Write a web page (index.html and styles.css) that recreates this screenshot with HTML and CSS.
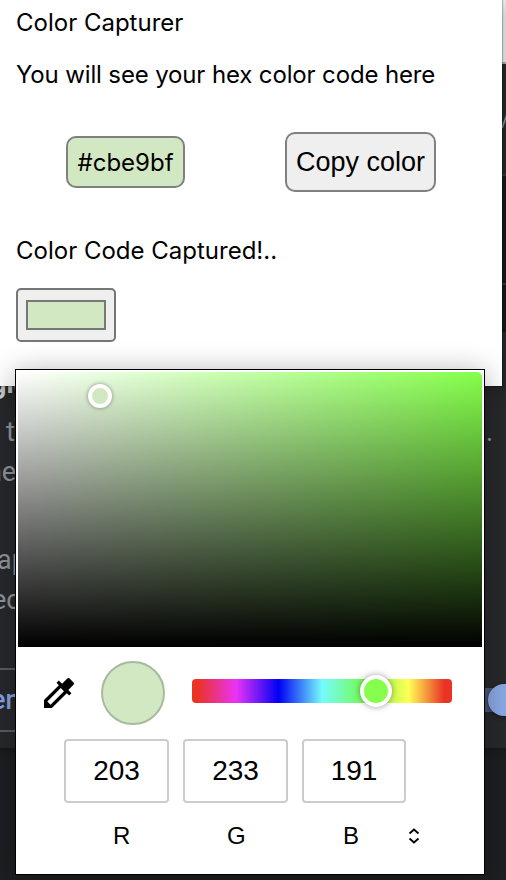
FILE: index.html
```html
<!DOCTYPE html>
<html lang="en">
<head>
<meta charset="utf-8">
<title>Color Capturer</title>
<link rel="stylesheet" href="styles.css">
</head>
<body>
<div class="stage">
  <div class="page">
    <div class="toolbar"></div>
    <div class="band band-a"></div>
    <div class="band band-b"></div>
    <div class="band band-c"></div>
    <div class="card"></div>
    <div class="rest"></div>
    <span class="bit slash">/</span>
    <span class="bit title">gle</span>
    <span class="bit t1">t</span>
    <span class="bit t2">he</span>
    <span class="bit t3">ap</span>
    <span class="bit t4">ec</span>
    <span class="bit t5">.</span>
    <div class="outline"><b>en</b></div>
    <div class="track"></div>
    <div class="knob"></div>
  </div>

  <main class="popup">
    <p class="line">Color Capturer</p>
    <p class="line hint">You will see your hex color code here</p>
    <div class="actions">
      <button class="code">#cbe9bf</button>
      <button class="copy">Copy color</button>
    </div>
    <p class="line status">Color Code Captured!..</p>
    <div class="swatch"><div class="swatch-fill"></div></div>
  </main>

  <section class="picker">
    <div class="field"><i class="cursor"></i></div>
    <div class="tools">
      <svg class="dropper" viewBox="3 3 18 18"><path d="M20.71 5.63l-2.34-2.34a1 1 0 0 0-1.41 0l-3.12 3.12-1.93-1.91-1.41 1.41 1.42 1.42L3 16.25V21h4.75l8.92-8.92 1.42 1.42 1.41-1.41-1.92-1.92 3.12-3.12c.4-.4.4-1.03.01-1.42zM6.92 19L5 17.08l8.06-8.06 1.92 1.92L6.92 19z"/></svg>
      <div class="preview"></div>
      <div class="hue"><i class="thumb"></i></div>
    </div>
    <div class="values">
      <div class="value">203</div>
      <div class="value">233</div>
      <div class="value">191</div>
    </div>
    <div class="labels">
      <span>R</span><span>G</span><span>B</span>
      <svg class="arrows" viewBox="0 0 12 16"><path d="M1.500 5.500L6 1.500l4.500 4M1.500 10.500l4.500 4 4.500-4"/></svg>
    </div>
  </section>
</div>
</body>
</html>
```
FILE: styles.css
```css
* { box-sizing: border-box; }
body { margin: 0; background: #1e1f22; color: #000; font-family: Inter, "Liberation Sans", sans-serif; }
.stage { position: relative; width: 506px; height: 880px; overflow: hidden; }

.page { height: 880px; font-family: Roboto, sans-serif; }
.toolbar { height: 64px; background: #ececec; border-bottom: 2px solid #aaa; }
.band-a { height: 110px; background: #26272a; }
.band-b { height: 109px; background: #18191b; border-top: 2px solid #36373a; }
.band-c { height: 49px; background: #18191b; border-top: 2px solid #36373a; }
.card { height: 416px; background: #28292c; }
.rest { height: 132px; background: linear-gradient(#18191b, #1e1f22 12px); }
.bit { position: absolute; font-size: 27px; line-height: 32px; color: #92979d; white-space: nowrap; }
.slash { left: 501px; top: 105px; font-size: 20px; line-height: 30px; }
.title { left: -9px; top: 368px; font-weight: 700; color: #d5d6d8; }
.t1 { left: 6px; top: 416px; }
.t2 { left: -13px; top: 456px; }
.t3 { left: -3px; top: 544px; }
.t4 { left: -8px; top: 584px; }
.t5 { left: 486px; top: 416px; }
.outline { position: absolute; left: -40px; top: 668px; width: 80px; height: 64px; border: solid #5b5d61; border-width: 2px 0; }
.outline b { display: block; margin: 14px 0 0 31px; font-size: 27px; line-height: 32px; font-weight: 500; color: #86a5e4; }
.track { position: absolute; left: 470px; top: 688px; width: 40px; height: 24px; background: #4d5b7d; }
.knob { position: absolute; left: 488px; top: 684px; width: 32px; height: 32px; border-radius: 50%; background: #8baae6; box-shadow: 0 1px 5px #0008; }

.popup { position: absolute; left: 0; top: 0; width: 502px; height: 386px; padding: 8px 16px 0; background: #fff; box-shadow: 0 0 1px 1px #0003, 0 5px 16px #0004; }
.line { margin: 0; font-size: 24px; line-height: 30px; white-space: nowrap; }
.hint { margin-top: 22px; letter-spacing: -.14px; }
.actions { display: flex; align-items: center; margin-top: 42px; padding-left: 50px; gap: 100px; }
button { padding: 0; border: 2px solid #808080; color: #000; white-space: nowrap; }
.code { width: 119px; height: 52px; border-radius: 10px; background: #d2e8c3; font: 24px Inter, sans-serif; }
.copy { width: 151px; height: 60px; border-radius: 10px; background: #efefef; font: 27px "Liberation Sans", sans-serif; }
.status { margin-top: 44px; }
.swatch { width: 100px; height: 54px; margin-top: 22px; padding: 10px 8px; border: 2px solid #767676; border-radius: 5px; background: #efefef; }
.swatch-fill { height: 30px; border: 2px solid #777; background: #d2e8c3; }

.picker { position: absolute; left: 15px; top: 369px; width: 470px; height: 506px; padding: 2px; background: #fff; border: 1px solid #000; box-shadow: 0 4px 28px #0005; }
.field { position: relative; height: 275px; border-radius: 5px 5px 0 0; background: linear-gradient(to bottom, transparent, #000), linear-gradient(to right, #fff, #85ff4b); }
.cursor { position: absolute; left: 70px; top: 12px; width: 24px; height: 24px; border: 4px solid #fff; border-radius: 50%; background: #d2e8c3; box-shadow: 0 0 4px #0006; }
.tools { display: flex; align-items: center; height: 92px; padding-left: 26px; }
.dropper { width: 30px; height: 30px; }
.preview { width: 64px; height: 64px; margin-left: 27px; border: 2px solid #a8ba9c; border-radius: 50%; background: #d2e8c3; }
.hue { position: relative; width: 260px; height: 24px; margin: -4px 0 0 27px; border-radius: 4px; background: linear-gradient(to right, #ea3323 2%, #ea33f7 17%, #0000f5 33.300%, #75fbfd 50%, #75fb4c 66.700%, #ffff54 83.300%, #ea3323 97%); }
.thumb { position: absolute; left: 168px; top: -4px; width: 32px; height: 32px; border: 4px solid #fff; border-radius: 50%; background: #85ff4b; box-shadow: 0 0 6px #0006; }
.values { display: grid; grid-template-columns: 105px 105px 104px; gap: 14px; margin-left: 46px; }
.value { height: 64px; border: 2px solid #ccc; border-radius: 4px; font: 28px/59px "Liberation Sans", sans-serif; text-align: center; }
.labels { display: grid; grid-template-columns: 114px 116px 65px 12px; align-items: center; height: 30px; margin: 18px 0 0 95px; font: 24px/30px "Liberation Sans", sans-serif; }
.arrows { width: 12px; height: 16px; fill: none; stroke: #000; stroke-width: 1.8; }
```
